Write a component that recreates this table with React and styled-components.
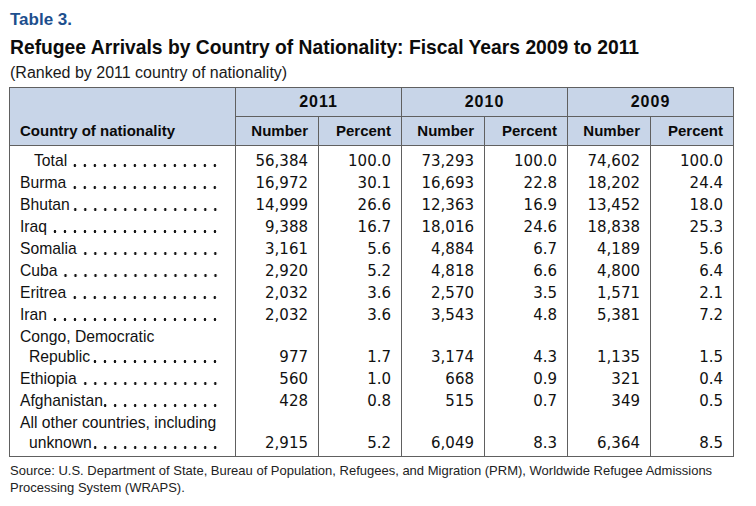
import React from 'react';
import styled, { createGlobalStyle } from 'styled-components';

const GlobalStyle = createGlobalStyle`
  body {
    margin: 0;
    background: #fff;
    color: #111;
    font-family: "Liberation Sans", Arial, sans-serif;
  }
`;

const rows = [
  { lines: ['Total'], total: true, v: ['56,384', '100.0', '73,293', '100.0', '74,602', '100.0'] },
  { lines: ['Burma'], v: ['16,972', '30.1', '16,693', '22.8', '18,202', '24.4'] },
  { lines: ['Bhutan'], v: ['14,999', '26.6', '12,363', '16.9', '13,452', '18.0'] },
  { lines: ['Iraq'], v: ['9,388', '16.7', '18,016', '24.6', '18,838', '25.3'] },
  { lines: ['Somalia'], v: ['3,161', '5.6', '4,884', '6.7', '4,189', '5.6'] },
  { lines: ['Cuba'], v: ['2,920', '5.2', '4,818', '6.6', '4,800', '6.4'] },
  { lines: ['Eritrea'], v: ['2,032', '3.6', '2,570', '3.5', '1,571', '2.1'] },
  { lines: ['Iran'], v: ['2,032', '3.6', '3,543', '4.8', '5,381', '7.2'] },
  { lines: ['Congo, Democratic', 'Republic'], v: ['977', '1.7', '3,174', '4.3', '1,135', '1.5'] },
  { lines: ['Ethiopia'], v: ['560', '1.0', '668', '0.9', '321', '0.4'] },
  { lines: ['Afghanistan'], v: ['428', '0.8', '515', '0.7', '349', '0.5'] },
  { lines: ['All other countries, including', 'unknown'], v: ['2,915', '5.2', '6,049', '8.3', '6,364', '8.5'] },
];

const years = ['2011', '2010', '2009'];

function Label({ lines, total }) {
  const head = lines.slice(0, -1);
  const last = lines[lines.length - 1];
  return (
    <LabelCell>
      {head.map((l) => (
        <Line key={l}>{l}</Line>
      ))}
      <Line $indent={total ? 14 : lines.length > 1 ? 9 : 0}>
        <span>{last}</span>
        <Leader />
      </Line>
    </LabelCell>
  );
}

export default function App() {
  return (
    <Page>
      <GlobalStyle />
      <TableNo>Table 3.</TableNo>
      <Title>Refugee Arrivals by Country of Nationality: Fiscal Years 2009 to 2011</Title>
      <Subtitle>(Ranked by 2011 country of nationality)</Subtitle>
      <Table>
        <colgroup>
          <col style={{ width: 226 }} />
          {[0, 1, 2, 3, 4, 5].map((i) => (
            <col key={i} style={{ width: 83 }} />
          ))}
        </colgroup>
        <thead>
          <tr>
            <CountryHead rowSpan={2}>Country of nationality</CountryHead>
            {years.map((y) => (
              <YearHead key={y} colSpan={2}>{y}</YearHead>
            ))}
          </tr>
          <tr>
            {years.map((y) => (
              <React.Fragment key={y}>
                <SubHead>Number</SubHead>
                <SubHead>Percent</SubHead>
              </React.Fragment>
            ))}
          </tr>
        </thead>
        <tbody>
          {rows.map((r) => (
            <tr key={r.lines[0]}>
              <Label lines={r.lines} total={r.total} />
              {r.v.map((n, i) => (
                <NumCell key={i}>{n}</NumCell>
              ))}
            </tr>
          ))}
        </tbody>
      </Table>
      <Source>
        Source: U.S. Department of State, Bureau of Population, Refugees, and Migration (PRM), Worldwide Refugee Admissions
        <br />
        Processing System (WRAPS).
      </Source>
    </Page>
  );
}

const Page = styled.div`
  padding: 10px 0 0 9px;
  width: 740px;
`;

const TableNo = styled.div`
  padding-left: 1px;
  color: #1d4f8e;
  font-weight: bold;
  font-size: 17px;
  line-height: 20px;
`;

const Title = styled.div`
  margin-top: 7px;
  padding-left: 1px;
  font-weight: bold;
  font-size: 19.3px;
  line-height: 22px;
  color: #0c0c0c;
  white-space: nowrap;
`;

const Subtitle = styled.div`
  margin-top: 4px;
  padding-left: 1px;
  font-size: 16px;
  line-height: 20px;
  color: #1a1a1a;
`;

const Table = styled.table`
  margin-top: 4px;
  border-collapse: collapse;
  table-layout: fixed;
  width: 725px;
  font-size: 15.7px;
  border: 1px solid #606060;

  th, td {
    border-left: 1px solid #606060;
    border-right: 1px solid #606060;
    padding: 0;
  }

  thead th {
    background: #c8d5e8;
    border: 1px solid #606060;
    height: 28px;
    line-height: 28px;
    font-weight: bold;
    color: #0a0a0a;
  }

  tbody td {
    padding: 1px 0;
  }

  tbody tr:first-child td {
    padding-top: 5px;
  }

  tbody tr:last-child td {
    padding-bottom: 3px;
  }
`;

const CountryHead = styled.th`
  text-align: left;
  vertical-align: bottom;
  padding-left: 10px !important;
  font-size: 15px;
`;

const YearHead = styled.th`
  text-align: center;
  font-size: 16px;
  letter-spacing: 1px;
`;

const SubHead = styled.th`
  text-align: right;
  padding-right: 10px !important;
  font-size: 15px;
`;

const LabelCell = styled.td`
  padding-left: 10px !important;
  padding-right: 15px !important;
  vertical-align: bottom;
  color: #111;
`;

const Line = styled.div`
  display: flex;
  line-height: 20px;
  white-space: nowrap;
  padding-left: ${(p) => p.$indent || 0}px;
`;

const Leader = styled.span`
  flex: 1;
  min-width: 0;
  height: 20px;
  background-image: radial-gradient(circle at 5px 14.5px, #111 1.1px, transparent 1.6px);
  background-size: 10px 20px;
  background-repeat: repeat-x;
  background-position: right top;
`;

const NumCell = styled.td`
  text-align: right;
  vertical-align: bottom;
  padding-right: 10px !important;
  font-family: "DejaVu Sans", "Liberation Sans", sans-serif;
  font-size: 15px;
  line-height: 20px;
  color: #111;
`;

const Source = styled.div`
  margin-top: 5px;
  padding-left: 1px;
  font-size: 13px;
  line-height: 17px;
  color: #222;
  white-space: nowrap;
`;
